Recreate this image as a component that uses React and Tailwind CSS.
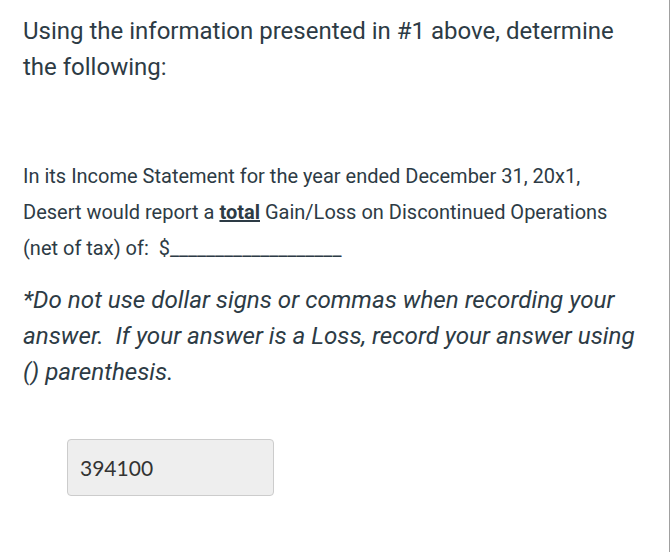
export default function App() {
  return (
    <div className="w-[672px] h-[552px] bg-white flex">
      <div className="w-[670px] h-full border-r border-[#a0a0a0] pl-[23px] pr-4 text-[#2d3b45]" style={{ fontFamily: "Roboto, sans-serif" }}>
        <p className="text-[24px] leading-[36px] pt-[13px]">
          Using the information presented in #1 above, determine the following:
        </p>
        <div className="h-[72px]" />
        <p className="text-[20px] leading-[36px] mt-[1px]">
          In its Income Statement for the year ended December 31, 20x1,<br />
          Desert would report a <strong className="font-bold underline">total</strong> Gain/Loss on Discontinued Operations<br />
          (net of tax) of:&nbsp; $___________________
        </p>
        <p className="text-[24.2px] leading-[36px] italic mt-[16px] pr-4">
          *Do not use dollar signs or commas when recording your answer.&nbsp; If your answer is a Loss, record your answer using () parenthesis.
        </p>
        <div className="pl-[44px] mt-[49px]">
          <div
            className="w-[207px] h-[57px] bg-[#eeeeee] border border-[#cccccc] rounded-[4px] flex items-center px-[12px] text-[21px] text-[#333333]"
            style={{ fontFamily: "Lato, sans-serif" }}
          >
            394100
          </div>
        </div>
      </div>
    </div>
  );
}
